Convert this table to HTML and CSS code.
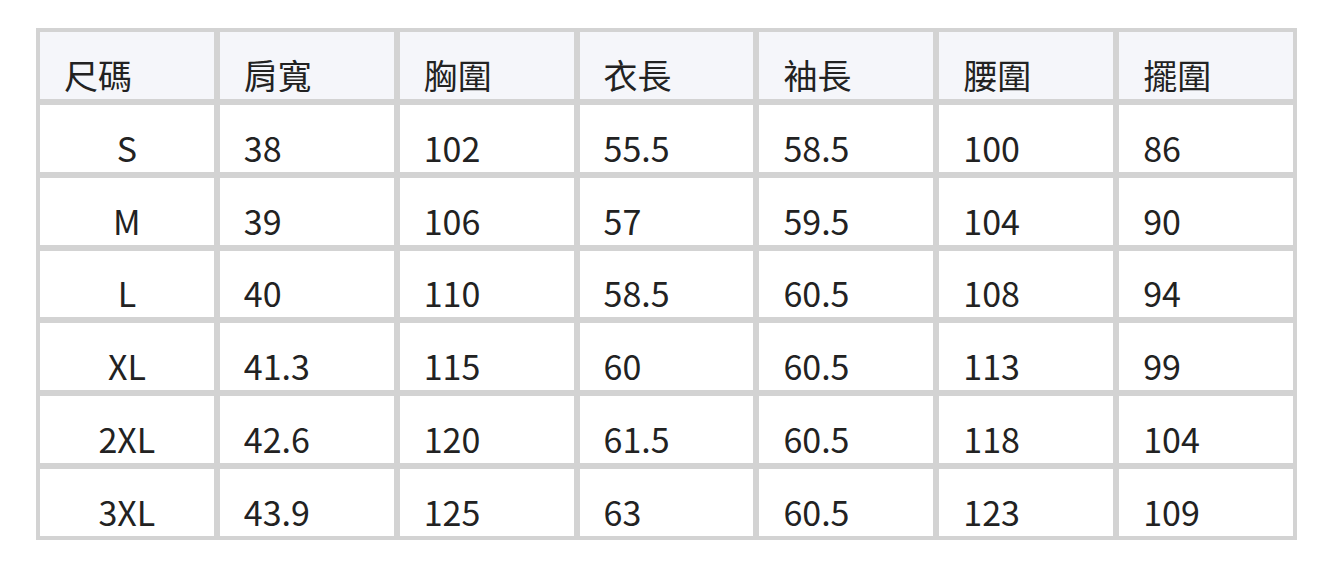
FILE: index.html
```html
<!DOCTYPE html>
<html lang="zh-Hant">
<head>
<meta charset="utf-8">
<title>尺碼表</title>
<link rel="stylesheet" href="styles.css">
</head>
<body>
<div class="size-table">
  <div class="cell head">尺碼</div><div class="cell head">肩寬</div><div class="cell head">胸圍</div><div class="cell head">衣長</div><div class="cell head">袖長</div><div class="cell head">腰圍</div><div class="cell head">擺圍</div>
  <div class="cell size">S</div><div class="cell">38</div><div class="cell">102</div><div class="cell">55.5</div><div class="cell">58.5</div><div class="cell">100</div><div class="cell">86</div>
  <div class="cell size">M</div><div class="cell">39</div><div class="cell">106</div><div class="cell">57</div><div class="cell">59.5</div><div class="cell">104</div><div class="cell">90</div>
  <div class="cell size">L</div><div class="cell">40</div><div class="cell">110</div><div class="cell">58.5</div><div class="cell">60.5</div><div class="cell">108</div><div class="cell">94</div>
  <div class="cell size">XL</div><div class="cell">41.3</div><div class="cell">115</div><div class="cell">60</div><div class="cell">60.5</div><div class="cell">113</div><div class="cell">99</div>
  <div class="cell size">2XL</div><div class="cell">42.6</div><div class="cell">120</div><div class="cell">61.5</div><div class="cell">60.5</div><div class="cell">118</div><div class="cell">104</div>
  <div class="cell size">3XL</div><div class="cell">43.9</div><div class="cell">125</div><div class="cell">63</div><div class="cell">60.5</div><div class="cell">123</div><div class="cell">109</div>
</div>
</body>
</html>
```
FILE: styles.css
```css
html, body {
  margin: 0;
  padding: 0;
  background: #ffffff;
}
body {
  font-family: "Noto Sans CJK TC", "Noto Sans", sans-serif;
  color: #222222;
}
.size-table {
  box-sizing: border-box;
  margin: 28px 0 0 36px;
  width: 1261px;
  height: 512px;
  padding: 4px;
  background: #d3d3d3;
  display: grid;
  grid-template-columns: repeat(7, 1fr);
  grid-template-rows: repeat(7, 1fr);
  gap: 6px;
}
.cell {
  background: #ffffff;
  display: flex;
  align-items: flex-end;
  padding: 0 24px;
  font-size: 34px;
  line-height: normal;
  overflow: hidden;
  white-space: nowrap;
}
.cell.head {
  background: #f5f6fa;
}
.cell.size {
  justify-content: center;
  padding: 0;
}
```
